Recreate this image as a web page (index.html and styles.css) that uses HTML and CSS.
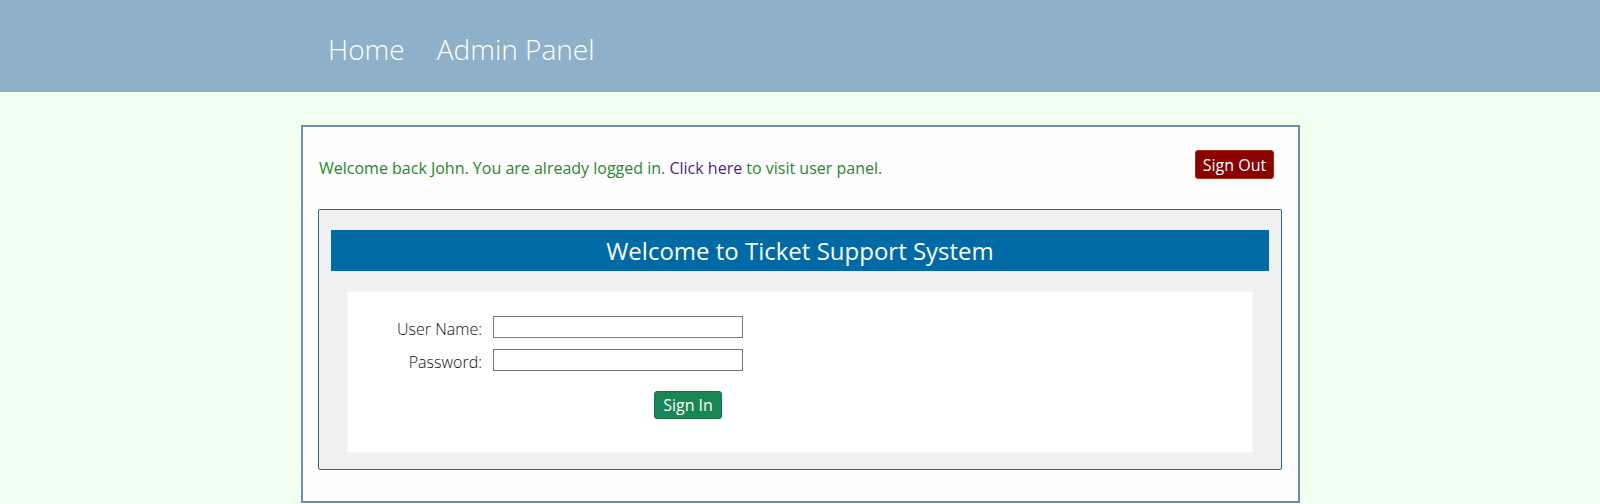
FILE: index.html
```html
<!DOCTYPE html>
<html lang="en">
<head>
<meta charset="utf-8">
<title>Ticket Support System</title>
<link rel="stylesheet" href="styles.css">
</head>
<body>
<header class="topbar">
  <nav class="nav">
    <a class="nav-link" href="#">Home</a>
    <a class="nav-link" href="#">Admin Panel</a>
  </nav>
</header>
<main class="page">
  <section class="container">
    <div class="status-row">
      <p class="status-msg">Welcome back John. You are already logged in. <a class="status-link" href="#">Click here</a> to visit user panel.</p>
      <button class="btn btn-signout" type="button">Sign Out</button>
    </div>
    <div class="panel">
      <h1 class="panel-title">Welcome to Ticket Support System</h1>
      <form class="login-box">
        <div class="form-grid">
          <label class="form-label" for="user">User Name:</label>
          <input class="form-input" id="user" type="text">
          <label class="form-label" for="pass">Password:</label>
          <input class="form-input" id="pass" type="password">
        </div>
        <div class="form-actions">
          <button class="btn btn-signin" type="button">Sign In</button>
        </div>
      </form>
    </div>
  </section>
</main>
</body>
</html>
```
FILE: styles.css
```css
html, body {
  margin: 0;
  padding: 0;
}
body {
  background: #f0fff0;
  font-family: "Open Sans", "Noto Sans", sans-serif;
}
.topbar {
  background: #8eb0c8;
  height: 92px;
  box-sizing: border-box;
  padding-top: 30px;
}
.nav {
  display: flex;
  gap: 32px;
  margin-left: 328px;
}
.nav-link {
  color: #ffffff;
  text-decoration: none;
  font-size: 28px;
  font-weight: 300;
  line-height: 38px;
}
.page {
  padding-top: 33px;
}
.container {
  width: 999px;
  box-sizing: border-box;
  margin-left: 301px;
  border: 2px solid #6d8da8;
  background: #fefeff;
  padding: 23px 16px 31px 15px;
}
.status-row {
  display: flex;
  justify-content: space-between;
  align-items: flex-start;
  padding-left: 1px;
  padding-right: 8px;
}
.status-msg {
  margin: 0;
  padding-top: 7px;
  font-size: 16px;
  line-height: 22px;
  color: #228b22;
}
.status-link {
  color: #551a8b;
  text-decoration: none;
}
.btn {
  font-family: "Open Sans", "Noto Sans", sans-serif;
  color: #ffffff;
  font-size: 16px;
  border-radius: 3px;
  cursor: pointer;
  box-sizing: border-box;
  padding: 0;
}
.btn-signout {
  background: #8b0000;
  border: 1px solid #a0301a;
  width: 79px;
  height: 29px;
}
.btn-signin {
  background: #198754;
  border: 1px solid #15704a;
  width: 68px;
  height: 28px;
}
.panel {
  margin-top: 30px;
  border: 1px solid #1a6aa4;
  border-radius: 2px;
  background: #f0f0f0;
  padding: 20px 12px 16px 12px;
}
.panel-title {
  margin: 0;
  background: #006aa7;
  color: #ffffff;
  text-align: center;
  font-size: 24px;
  font-weight: 400;
  height: 41px;
  line-height: 41px;
}
.login-box {
  margin: 20px 16px 0 16px;
  background: #ffffff;
  border: 1px solid #eefafa;
  height: 162px;
  box-sizing: border-box;
  padding-top: 24px;
}
.form-grid {
  display: grid;
  grid-template-columns: 100px 250px;
  column-gap: 11px;
  row-gap: 11px;
  margin-left: 34px;
  align-items: center;
}
.form-label {
  text-align: right;
  font-size: 16px;
  color: #111111;
  font-weight: 300;
  line-height: 20px;
  margin-top: 3px;
  margin-bottom: -1px;
}
.form-input {
  box-sizing: border-box;
  width: 250px;
  height: 22px;
  border: 1px solid #767676;
  margin: 0;
  padding: 1px 2px;
  font-size: 13px;
}
.form-actions {
  margin-top: 20px;
  margin-left: 306px;
}
```
